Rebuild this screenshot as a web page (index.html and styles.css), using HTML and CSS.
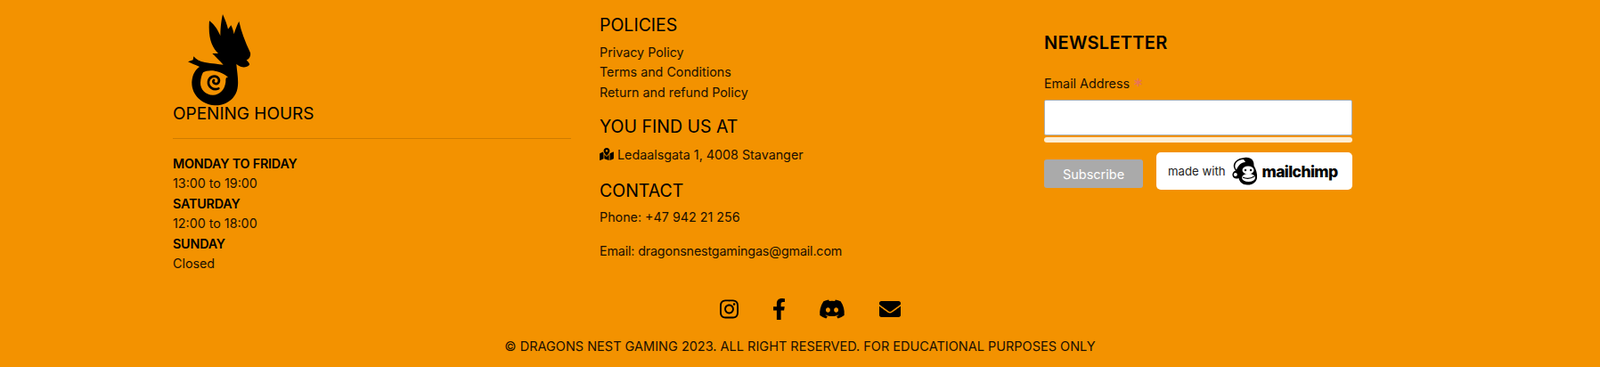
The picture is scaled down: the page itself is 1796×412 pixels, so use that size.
FILE: index.html
```html
<!DOCTYPE html>
<html lang="en">
<head>
    <meta charset="UTF-8">
    <meta name="viewport" content="width=device-width, initial-scale=1.0">
    <title>Dragons Nest Gaming</title>
    <link rel="stylesheet" href="styles.css">
</head>
<body>
    <footer class="footer">
        <div class="columns">
            <!-- Opening hours -->
            <div class="col col-hours">
                <svg class="logo" viewBox="0 0 270 326" width="90" height="108.700" aria-label="Dragons Nest logo">
                    <path fill="#000" d="M105 40C125 55 135 75 142 90C142 60 146 35 150 18C158 35 165 55 168 68L178 55C183 65 186 75 188 85C192 70 198 55 205 42C212 75 225 110 243 148C245 160 238 170 230 172C234 178 241 183 240 188C232 198 215 198 205 192L196 186C198 210 203 235 201 258C198 300 165 325 122 325C80 322 44 290 46 245C48 220 58 205 72 195C60 190 46 184 33 178L50 172L52 160C60 170 72 177 90 180C115 184 135 186 152 188C140 175 125 160 115 150L135 150C115 130 100 100 105 40Z"/>
                    <path fill="#f39200" d="M84 214C100 204 138 204 168 230C160 229 160 236 160 246C157 272 140 290 117 290C92 290 74 270 75 248C76 234 79 222 84 214Z"/>
                    <path fill="none" stroke="#000" stroke-width="8" stroke-linecap="round" d="M136 268C118 276 100 262 102 244C104 230 120 222 132 230C142 238 138 254 125 252C118 250 116 244 120 240"/>
                </svg>
                <h2 class="heading heading-hours">OPENING HOURS</h2>
                <hr class="rule">
                <ul class="hours">
                    <li><strong>MONDAY TO FRIDAY</strong></li>
                    <li>13:00 to 19:00</li>
                    <li><strong>SATURDAY</strong></li>
                    <li>12:00 to 18:00</li>
                    <li><strong>SUNDAY</strong></li>
                    <li>Closed</li>
                </ul>
            </div>

            <!-- Policies, address, contact -->
            <div class="col col-info">
                <h2 class="heading">POLICIES</h2>
                <ul class="links">
                    <li><a href="#">Privacy Policy</a></li>
                    <li><a href="#">Terms and Conditions</a></li>
                    <li><a href="#">Return and refund Policy</a></li>
                </ul>
                <h2 class="heading heading-find">YOU FIND US AT</h2>
                <p class="address">
                    <svg class="map-icon" viewBox="0 0 576 512" aria-hidden="true"><path d="M288 0c-69.59 0-126 56.41-126 126 0 56.26 82.35 158.8 113.9 196.02 6.39 7.54 17.82 7.54 24.2 0C331.65 284.8 414 182.26 414 126 414 56.41 357.59 0 288 0zm0 168c-23.2 0-42-18.8-42-42s18.8-42 42-42 42 18.8 42 42-18.8 42-42 42zM20.12 215.95A32.006 32.006 0 0 0 0 245.66v250.32c0 11.32 11.43 19.06 21.94 14.86L160 448V214.92c-8.84-15.98-16.07-31.54-21.25-46.42L20.12 215.95zM288 359.67c-14.07 0-27.38-6.18-36.51-16.96-19.66-23.2-40.57-49.62-59.49-76.72v182l192 64V266c-18.92 27.09-39.82 53.52-59.49 76.72-9.13 10.77-22.44 16.95-36.51 16.95zm266.06-198.51L416 224v288l139.88-55.95A31.996 31.996 0 0 0 576 426.34V176.02c0-11.32-11.43-19.06-21.94-14.86z"/></svg>
                    Ledaalsgata 1, 4008 Stavanger
                </p>
                <h2 class="heading heading-contact">CONTACT</h2>
                <p class="phone">Phone: +47 942 21 256</p>
                <p class="email">Email: dragonsnestgamingas@gmail.com</p>
            </div>

            <!-- Newsletter -->
            <div class="col col-news">
                <h2 class="news-title">NEWSLETTER</h2>
                <form class="news-form">
                    <label class="news-label" for="news-email">Email Address <span class="required">*</span></label>
                    <input class="news-input" type="email" id="news-email">
                    <div class="news-bar"></div>
                    <div class="news-actions">
                        <button class="subscribe" type="button">Subscribe</button>
                        <a class="badge" href="#">
                            <span class="badge-made">made with</span>
                            <svg class="chimp" viewBox="0 0 32 32" aria-hidden="true">
                                <path fill="#000" d="M16 1C23 0 27 4 26.500 10C29 14 30.500 19 30 24C29 29 24 32 19 31.500C14 31.500 10 28 9.500 24C6 25.500 3 24 2.500 21C2 18.500 4 16 6 15.500C3 12 3 8 6 5C9 2 12 1.500 16 1Z"/>
                                <path fill="#fff" d="M15 3C10 3 6.500 5.500 5.500 9C5 11 5.500 13 7 14.500C9 9.500 12 6.500 17 6Z"/>
                                <ellipse cx="20" cy="15" rx="6.500" ry="4.500" fill="#fff"/>
                                <ellipse cx="20.500" cy="23.500" rx="7.500" ry="4.500" fill="#fff"/>
                                <circle cx="5.800" cy="20" r="2" fill="#fff"/>
                                <circle cx="17" cy="15" r="1.200" fill="#000"/>
                                <circle cx="23" cy="15" r="1.200" fill="#000"/>
                                <path fill="none" stroke="#000" stroke-width="1.200" d="M14 23C18 25 23 24.500 27 22"/>
                            </svg>
                            <span class="badge-brand">mailchimp</span>
                        </a>
                    </div>
                </form>
            </div>
        </div>

        <!-- Social links -->
        <div class="social">
            <a href="#" class="social-link"><svg viewBox="0 0 448 512" width="21" height="24" aria-hidden="true"><path d="M224.1 141c-63.6 0-114.9 51.3-114.9 114.9s51.3 114.9 114.9 114.9S339 319.5 339 255.9 287.7 141 224.1 141zm0 189.6c-41.1 0-74.7-33.5-74.7-74.7s33.5-74.7 74.7-74.7 74.7 33.5 74.7 74.7-33.6 74.7-74.7 74.7zm146.4-194.3c0 14.9-12 26.8-26.8 26.8-14.9 0-26.8-12-26.8-26.8s12-26.8 26.8-26.8 26.8 12 26.8 26.8zm76.1 27.2c-1.700-35.900-9.900-67.700-36.200-93.900-26.200-26.200-58-34.400-93.900-36.200-37-2.100-147.900-2.100-184.900 0-35.800 1.700-67.600 9.900-93.900 36.100s-34.400 58-36.200 93.900c-2.100 37-2.100 147.900 0 184.900 1.700 35.900 9.900 67.700 36.200 93.900s58 34.400 93.900 36.200c37 2.100 147.900 2.100 184.900 0 35.900-1.700 67.700-9.900 93.900-36.200 26.200-26.200 34.400-58 36.200-93.900 2.100-37 2.100-147.800 0-184.800zM398.800 388c-7.800 19.600-22.900 34.700-42.600 42.600-29.500 11.700-99.500 9-132.100 9s-102.700 2.600-132.100-9c-19.600-7.800-34.700-22.900-42.600-42.600-11.700-29.500-9-99.500-9-132.100s-2.600-102.700 9-132.100c7.800-19.600 22.900-34.700 42.600-42.600 29.500-11.700 99.500-9 132.100-9s102.700-2.600 132.100 9c19.600 7.800 34.700 22.900 42.600 42.600 11.700 29.500 9 99.500 9 132.100s2.700 102.700-9 132.100z"/></svg></a>
            <a href="#" class="social-link"><svg viewBox="0 0 320 512" width="15" height="24" aria-hidden="true"><path d="M279.14 288l14.22-92.66h-88.91v-60.13c0-25.35 12.42-50.06 52.24-50.06h40.42V6.26S260.43 0 225.36 0c-73.22 0-121.08 44.38-121.08 124.72v70.62H22.89V288h81.39v224h100.17V288z"/></svg></a>
            <a href="#" class="social-link"><svg viewBox="0 0 640 512" width="30" height="24" aria-hidden="true"><path d="M524.531,69.836a1.5,1.5,0,0,0-.764-.7A485.065,485.065,0,0,0,404.081,32.03a1.816,1.816,0,0,0-1.923.91,337.461,337.461,0,0,0-14.9,30.6,447.848,447.848,0,0,0-134.426,0,309.541,309.541,0,0,0-15.135-30.6,1.89,1.89,0,0,0-1.924-.91A483.689,483.689,0,0,0,116.085,69.137a1.712,1.712,0,0,0-.788.676C39.068,183.651,18.186,294.69,28.43,404.354a2.016,2.016,0,0,0,.765,1.375A487.666,487.666,0,0,0,176.02,479.918a1.9,1.9,0,0,0,2.063-.676A348.2,348.2,0,0,0,208.12,430.4a1.86,1.86,0,0,0-1.019-2.588,321.173,321.173,0,0,1-45.868-21.853,1.885,1.885,0,0,1-.185-3.126c3.082-2.309,6.166-4.711,9.109-7.137a1.819,1.819,0,0,1,1.9-.256c96.229,43.917,200.41,43.917,295.5,0a1.812,1.812,0,0,1,1.924.233c2.944,2.426,6.027,4.851,9.132,7.16a1.884,1.884,0,0,1-.162,3.126,301.407,301.407,0,0,1-45.89,21.83,1.875,1.875,0,0,0-1,2.611,391.055,391.055,0,0,0,30.014,48.815,1.864,1.864,0,0,0,2.063.7A486.048,486.048,0,0,0,610.7,405.729a1.882,1.882,0,0,0,.765-1.352C623.729,277.594,590.933,167.465,524.531,69.836ZM222.491,337.58c-28.972,0-52.844-26.587-52.844-59.239S193.056,219.1,222.491,219.1c29.665,0,53.306,26.82,52.843,59.239C275.334,310.993,251.924,337.58,222.491,337.58Zm195.38,0c-28.971,0-52.843-26.587-52.843-59.239S388.437,219.1,417.871,219.1c29.667,0,53.307,26.82,52.844,59.239C470.715,310.993,447.538,337.58,417.871,337.58Z"/></svg></a>
            <a href="#" class="social-link"><svg viewBox="0 0 512 512" width="24" height="24" aria-hidden="true"><path d="M502.3 190.8c3.900-3.100 9.700-.2 9.700 4.700V400c0 26.500-21.500 48-48 48H48c-26.500 0-48-21.500-48-48V195.600c0-5 5.700-7.800 9.700-4.700 22.400 17.400 52.100 39.500 154.100 113.600 21.100 15.400 56.700 47.800 92.200 47.600 35.700.3 72-32.800 92.300-47.600 102-74.100 131.600-96.300 154-113.700zM256 320c23.200.4 56.600-29.200 73.400-41.400 132.700-96.300 142.800-104.700 173.400-128.700 5.800-4.500 9.200-11.500 9.200-18.900v-19c0-26.500-21.500-48-48-48H48C21.500 64 0 85.500 0 112v19c0 7.400 3.400 14.300 9.200 18.900 30.600 23.900 40.700 32.400 173.400 128.700 16.800 12.200 50.200 41.800 73.400 41.400z"/></svg></a>
        </div>

        <p class="copyright">© DRAGONS NEST GAMING 2023. ALL RIGHT RESERVED. FOR EDUCATIONAL PURPOSES ONLY</p>
    </footer>
</body>
</html>
```

FILE: styles.css
```css
* {
    box-sizing: border-box;
}

body {
    margin: 0;
    background-color: #f39200;
    color: #1a0f00;
    font-family: Inter, "Noto Sans", sans-serif;
    font-size: 14.3px;
    overflow: hidden;
}

a {
    color: inherit;
    text-decoration: none;
}

ul {
    list-style: none;
    margin: 0;
    padding: 0;
}

p {
    margin: 0;
}

.footer {
    height: 412px;
}

.columns {
    display: grid;
    grid-template-columns: 479px 499px 378px;
    height: 322px;
    padding-left: 178px;
}

.col {
    padding: 0 16px;
}

.heading {
    margin: 0;
    color: #000;
    font-size: 19.5px;
    font-weight: 400;
    line-height: 24px;
}

.heading-hours {
    font-size: 19px;
    line-height: 22px;
}

.logo {
    display: block;
    margin: 10px 0 -2px 6px;
}

.rule {
    margin: 16.5px 0 0;
    border: 0;
    border-top: 1px solid rgba(0, 0, 0, 0.15);
}

.hours {
    margin-top: 16.5px;
    line-height: 22.5px;
}

.hours strong {
    color: #000;
    font-weight: 600;
    letter-spacing: -0.18px;
}

.col-info {
    padding-top: 16px;
}

.links {
    margin-top: 7.7px;
    line-height: 22.5px;
}

.heading-find {
    margin-top: 14.8px;
}

.address {
    margin-top: 9px;
    line-height: 22px;
}

.map-icon {
    width: 16px;
    height: 14px;
    vertical-align: -1px;
    fill: #000;
}

.heading-contact {
    margin-top: 17px;
}

.phone {
    margin-top: 7.5px;
    line-height: 22px;
}

.email {
    margin-top: 16px;
    line-height: 22px;
    letter-spacing: -0.15px;
}

.col-news {
    padding-top: 36px;
}

.news-title {
    margin: 0;
    color: #000;
    font-size: 20px;
    font-weight: 600;
    line-height: 24px;
    letter-spacing: 0.3px;
}

.news-form {
    margin-top: 23px;
}

.news-label {
    display: block;
    line-height: 22px;
}

.required {
    color: #e8735a;
    font-size: 22px;
    line-height: 0;
    vertical-align: -5px;
}

.news-input {
    display: block;
    width: 100%;
    height: 40px;
    margin-top: 7px;
    background: #fff;
    border: 1px solid #abb0b2;
    border-radius: 2px;
}

.news-bar {
    height: 6px;
    margin-top: 2px;
    background: #fdeed3;
    border-radius: 3px;
}

.news-actions {
    display: flex;
    align-items: flex-start;
    gap: 15px;
    margin-top: 11px;
}

.subscribe {
    width: 111px;
    height: 32px;
    margin-top: 8px;
    padding: 0;
    background: #aaa;
    color: #fff;
    border: 0;
    border-radius: 3px;
    font-family: inherit;
    font-size: 14.5px;
}

.badge {
    display: flex;
    align-items: center;
    width: 220px;
    height: 42px;
    padding-left: 13px;
    background: #fff;
    border-radius: 5px;
}

.badge-made {
    font-size: 13.2px;
    color: #222;
}

.chimp {
    width: 32px;
    height: 32px;
    margin-left: 5px;
}

.badge-brand {
    margin-left: 4px;
    color: #000;
    font-size: 17.5px;
    font-weight: 800;
    letter-spacing: -0.6px;
}

.social {
    display: flex;
    justify-content: center;
    align-items: center;
    gap: 37.5px;
    height: 50px;
    padding-left: 23px;
}

.social-link {
    display: flex;
    color: #000;
}

.copyright {
    margin-top: 6px;
    font-size: 14.5px;
    text-align: center;
    line-height: 22px;
}
```
